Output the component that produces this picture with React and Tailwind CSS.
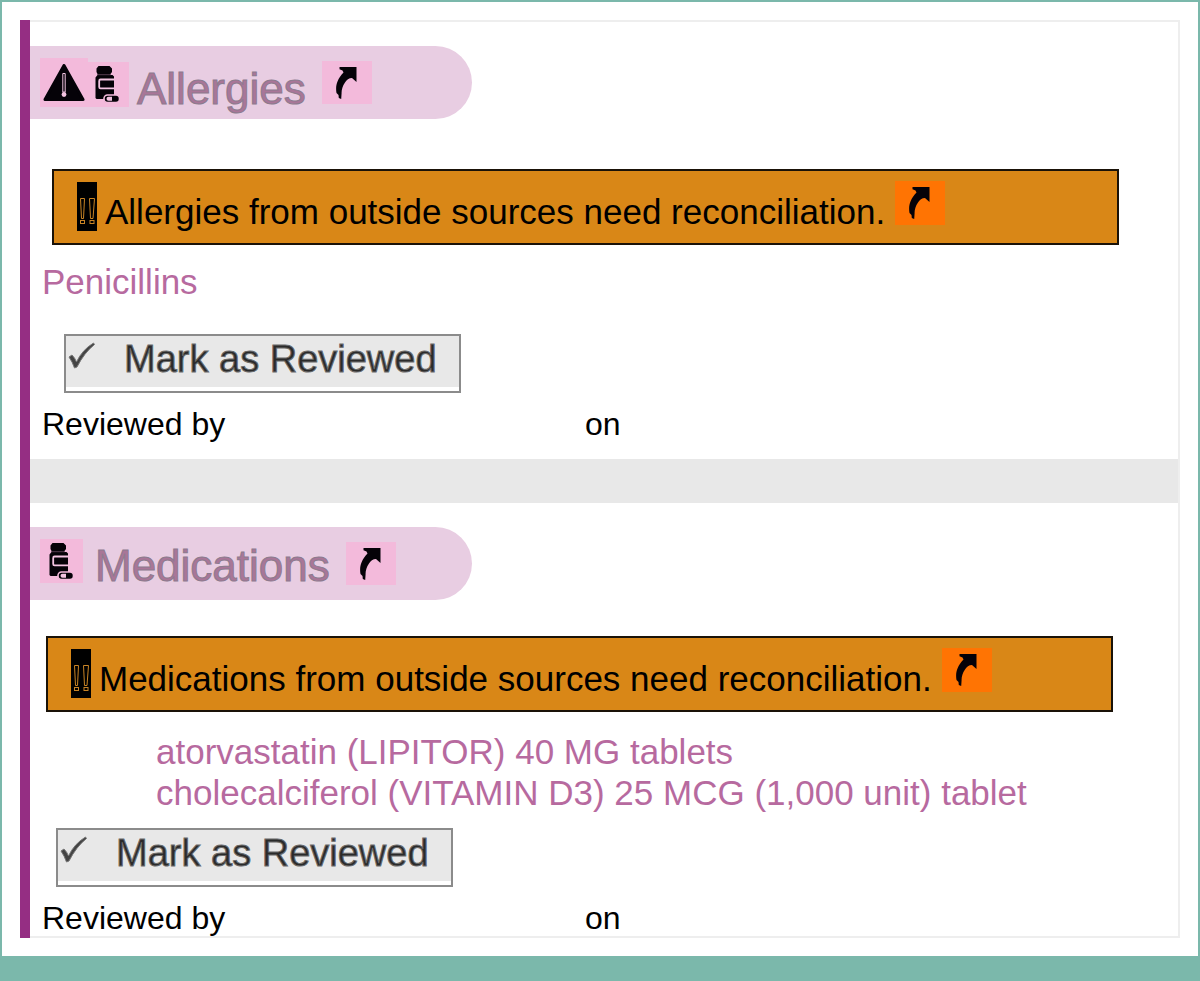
function JumpArrow() {
  return (
    <svg viewBox="0 0 21 32" className="h-8 w-[21px]" fill="#050208" aria-hidden="true">
      <path d="M3.500 0H20.500V15L16 11C13 11 10.500 13 9 15.500C6.500 19 5.500 23 5.600 26L5.200 32L2.800 31L2.500 28L.5 26C-.2 22 0 18 1.500 14.500C2.800 11 5 8 7.500 5.500L6.500 3.500L3.500 2.200Z" />
    </svg>
  );
}

function JumpButton({ label, className }) {
  return (
    <button type="button" aria-label={label} className={`flex w-[50px] shrink-0 pt-1.5 pl-3.5 ${className}`}>
      <JumpArrow />
    </button>
  );
}

function WarningIcon() {
  return (
    <svg viewBox="0 0 42 38" className="h-[38px] w-[42px]" aria-hidden="true">
      <path d="M21 1.500L40 35.500H2Z" fill="#050208" stroke="#050208" strokeWidth="3" strokeLinejoin="round" />
      <path d="M19.800 9.500h2.400v18.500h-2.400Z" fill="#050208" stroke="#f0c3e0" strokeWidth="1" />
      <circle cx="21" cy="30.500" r="2.400" fill="#f3c3e1" />
    </svg>
  );
}

function BottleIcon() {
  return (
    <svg viewBox="0 0 25 37" className="h-[37px] w-[25px]" aria-hidden="true">
      <path d="M3.500 0H14.500L17 2.500V6L15.500 8V9H17.500L19 10.500V33H1.500L.5 32V11.500L2.500 9V8L1.500 6V2.500Z" fill="#050208" />
      <path d="M2.800 8.700H16" stroke="#8c6180" strokeWidth=".6" />
      <path d="M19.500 13.500H5.500Q4.200 13.500 4.200 15V21Q4.200 22.300 5.500 22.300H19.500" fill="none" stroke="#f3c3e1" strokeWidth="1.800" />
      <rect x="9" y="29" width="15.500" height="7.500" rx="3.500" fill="#050208" stroke="#f3badb" strokeWidth="1.600" />
      <path d="M17 30.800V34.800H13.500Q11.500 34.800 11.500 32.800T13.500 30.800Z" fill="#f3c3e1" />
    </svg>
  );
}

function DoubleBang() {
  return (
    <svg viewBox="0 0 20 49" className="h-[49px] w-5 shrink-0" aria-hidden="true">
      <rect width="20" height="49" fill="#000" />
      <g fill="none" stroke="#c98425" strokeWidth="1">
        <path d="M3.500 16.500H7.500L6.500 36.500H4.500Z" />
        <path d="M12.500 16.500H17.500L16 36.500H13.500Z" />
        <rect x="3.500" y="38.500" width="4" height="3" />
        <rect x="13" y="38.500" width="4" height="3" />
      </g>
    </svg>
  );
}

function SectionHeader({ title, icons, className }) {
  return (
    <header className="flex h-[73px] w-[442px] items-start rounded-r-full bg-[#e8cde2] pl-2.5">
      <div className="flex items-end pt-3">{icons}</div>
      <h2 className={`text-[44px] leading-[50px] text-[#a97698] [-webkit-text-stroke:1px_#8c7b8e] ${className}`}>
        {title}
      </h2>
      <JumpButton label={`Open ${title}`} className="mt-[15px] ml-4 h-[43px] bg-[#f3badb]" />
    </header>
  );
}

function Alert({ children, label, className }) {
  return (
    <div className={`flex h-[76px] items-start border-2 border-[#1a1208] bg-[#d98717] pl-[23px] ${className}`} role="alert">
      <div className="pt-[11px]">
        <DoubleBang />
      </div>
      <p className="pt-[21px] pl-2 text-[35px] leading-10 whitespace-nowrap text-black">{children}</p>
      <JumpButton label={label} className="mt-2.5 ml-2.5 h-11 bg-[#ff7403]" />
    </div>
  );
}

function ReviewButton({ className }) {
  return (
    <button
      type="button"
      className={`flex h-[59px] w-[397px] items-start border-2 border-[#8b8b8b] bg-white pb-1 text-[38px] leading-[46px] text-[#2a2a2a] ${className}`}
    >
      <span className="flex h-full w-full bg-[#e8e8e8] pl-0.5">
        <svg viewBox="0 0 28 28" className="mt-1.5 mr-7 h-7 w-7" aria-hidden="true">
          <path d="M1 15L4 13Q7 16 8.500 20Q14 8 25.500 1L26.500 2.500Q16 11 9 25L6.500 26Q4.500 20 1 15Z" fill="#444" stroke="#777" strokeWidth="1" />
        </svg>
        <span className="whitespace-nowrap [-webkit-text-stroke:1px_#6a6a6a]">Mark as Reviewed</span>
      </span>
    </button>
  );
}

function ReviewedLine() {
  return (
    <p className="flex pl-3 text-[32px] leading-9 text-black">
      <span className="w-[543px]">Reviewed by</span>
      <span>on</span>
    </p>
  );
}

export default function App() {
  return (
    <div className="min-h-screen bg-[#7bb8ab] px-0.5 pt-0.5 pb-6 font-['Liberation_Sans',Arial,sans-serif]">
      <main className="bg-white p-[18px]">
        <div className="flex">
          <div className="w-2.5 shrink-0 bg-[#952e83]" />
          <div className="grow border-y-2 border-r-2 border-[#eeeeee]">
            <section className="pt-6 pb-4">
              <SectionHeader
                title="Allergies"
                className="ml-2 pt-[18px]"
                icons={
                  <>
                    <span className="flex h-[49px] w-12 justify-center bg-[#f3badb] pt-1.5">
                      <WarningIcon />
                    </span>
                    <span className="flex h-[45px] w-[41px] bg-[#f3badb] pt-1 pl-[7px]">
                      <BottleIcon />
                    </span>
                  </>
                }
              />
              <Alert label="Reconcile allergies" className="mt-[50px] mr-[59px] ml-[22px]">
                Allergies from outside sources need reconciliation.
              </Alert>
              <p className="mt-4 pl-3 text-[35px] leading-[41px]">
                <a href="#penicillins" className="text-[#b76a9f]">Penicillins</a>
              </p>
              <ReviewButton className="mt-8 mb-[13px] ml-[34px]" />
              <ReviewedLine />
            </section>
            <div className="mt-px h-11 bg-[#e8e8e8]" />
            <section className="pt-6">
              <SectionHeader
                title="Medications"
                className="ml-3 pt-3.5"
                icons={
                  <span className="flex h-11 w-[43px] justify-center bg-[#f3badb] pt-1">
                    <BottleIcon />
                  </span>
                }
              />
              <Alert label="Reconcile medications" className="mt-9 mr-[65px] ml-4">
                Medications from outside sources need reconciliation.
              </Alert>
              <ul className="mt-[19px] pl-[126px] text-[35px] leading-[41px]">
                <li>
                  <a href="#atorvastatin" className="text-[#b76a9f]">atorvastatin (LIPITOR) 40 MG tablets</a>
                </li>
                <li>
                  <a href="#cholecalciferol" className="text-[#b76a9f]">cholecalciferol (VITAMIN D3) 25 MCG (1,000 unit) tablet</a>
                </li>
              </ul>
              <ReviewButton className="mt-[15px] mb-[13px] ml-[26px]" />
              <ReviewedLine />
            </section>
          </div>
        </div>
      </main>
    </div>
  );
}
